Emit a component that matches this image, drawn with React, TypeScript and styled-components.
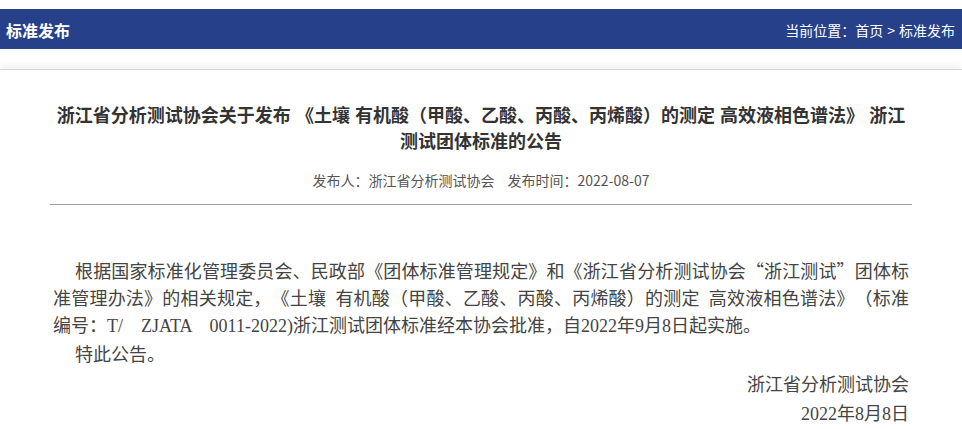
import React from 'react';
import styled, { createGlobalStyle } from 'styled-components';

const GlobalStyle = createGlobalStyle`
  html, body {
    margin: 0;
    padding: 0;
    background: #fff;
  }
  body {
    font-family: "Noto Sans CJK SC", "Liberation Sans", sans-serif;
    text-spacing-trim: space-all;
  }
`

const Page = styled.div`
  width: 962px;
  padding-top: 9px;
`

const TopBar = styled.div`
  height: 40px;
  background-color: #26408a;
  display: flex;
  flex-direction: row;
  align-items: center;
  justify-content: space-between;
  padding: 0 7px 0 6px;
  color: #fff;

  h2 {
    margin: 0;
    font-size: 16px;
    font-weight: 700;
    line-height: 40px;
    padding-top: 2px;
  }
`

const Crumbs = styled.div`
  font-size: 14px;
  line-height: 40px;
  padding-top: 2px;

  span {
    margin: 0 4px;
  }
`

const Panel = styled.div`
  margin-top: 20px;
  border-top: 1px solid #d6d6d6;
  box-shadow: 0 -4px 6px rgba(0, 0, 0, 0.05);
  background: #fff;
`

const Article = styled.div`
  width: 862px;
  margin: 0 auto;
  padding-top: 31px;
`

const Title = styled.h1`
  margin: 0;
  font-size: 18px;
  font-weight: 700;
  line-height: 26px;
  color: #333;
  text-align: center;
  word-spacing: 1px;
`

const Meta = styled.div`
  margin-top: 17px;
  font-size: 14px;
  line-height: 20px;
  color: #555;
  text-align: center;

  span + span {
    margin-left: 13px;
  }
`

const Rule = styled.hr`
  margin: 14px 0 0;
  border: 0;
  border-top: 1px solid #9a9a9a;
  height: 0;
`

const Body = styled.div`
  padding: 52px 3px 0;
  font-family: "Liberation Serif", "Noto Sans CJK SC", serif;
  font-size: 18px;
  color: #444;
  word-spacing: 4.5px;
`

const Para = styled.p<{ $indent?: boolean }>`
  margin: 0 0 2px;
  line-height: 27px;
  text-align: justify;
  text-indent: ${p => (p.$indent ? '22px' : '0')};
  white-space: pre-wrap;
`

// full-width quotes, as the CJK font draws them
const Q = styled.span`
  font-family: "Noto Sans CJK SC", sans-serif;
`

const Sign = styled.div`
  margin-top: 2px;
  text-align: right;
  line-height: 29px;
`

const App: React.FC = () => (
  <Page>
    <GlobalStyle />
    <TopBar>
      <h2>标准发布</h2>
      <Crumbs>
        当前位置：首页<span>&gt;</span>标准发布
      </Crumbs>
    </TopBar>
    <Panel>
      <Article>
        <Title>
          浙江省分析测试协会关于发布 《土壤 有机酸（甲酸、乙酸、丙酸、丙烯酸）的测定 高效液相色谱法》 浙江测试团体标准的公告
        </Title>
        <Meta>
          <span>发布人：浙江省分析测试协会</span>
          <span>发布时间：2022-08-07</span>
        </Meta>
        <Rule />
        <Body>
          <Para $indent>
            根据国家标准化管理委员会、民政部《团体标准管理规定》和《浙江省分析测试协会<Q>“</Q>浙江测试<Q>”</Q>团体标准管理办法》的相关规定，《土壤 有机酸（甲酸、乙酸、丙酸、丙烯酸）的测定 高效液相色谱法》（标准编号：T/  ZJATA  0011-2022)浙江测试团体标准经本协会批准，自2022年9月8日起实施。
          </Para>
          <Para $indent>特此公告。</Para>
          <Sign>
            <div>浙江省分析测试协会</div>
            <div>2022年8月8日</div>
          </Sign>
        </Body>
      </Article>
    </Panel>
  </Page>
)

export default App;
